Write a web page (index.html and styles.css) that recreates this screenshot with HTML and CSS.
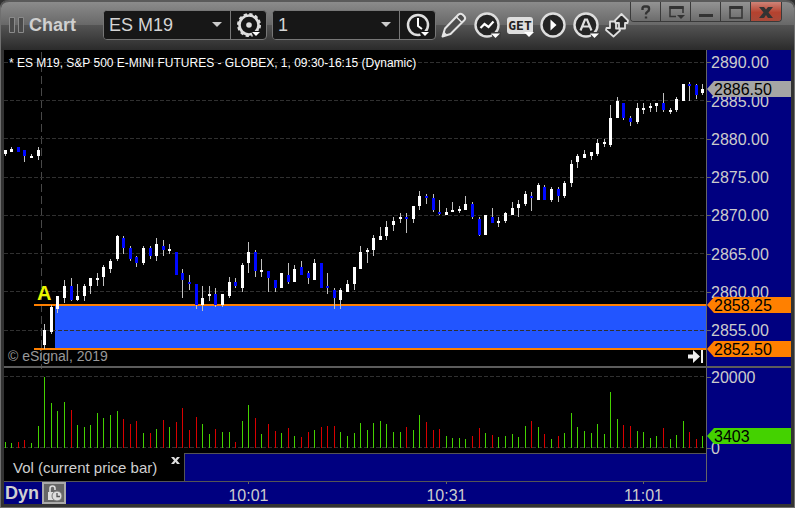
FILE: index.html
```html
<!DOCTYPE html>
<html lang="en">
<head>
<meta charset="utf-8">
<title>Chart - ES M19</title>
<link rel="stylesheet" href="styles.css">
</head>
<body>
<main class="window">
  <header class="titlebar">
    <svg class="grip" width="16" height="16" viewBox="0 0 16 16" aria-hidden="true"><path d="M.5.5h5v15h-5zM9.500.5h5v15h-5z" fill="#4a4a4a" stroke="#8a8a8a"/></svg>
    <h1 class="title">Chart</h1>
    <div class="combo combo-symbol">
      <select class="combo-select" aria-label="Symbol"><option>ES M19</option></select>
      <button class="combo-button" aria-label="Symbol settings">
        <svg width="28" height="28" viewBox="0 0 28 28"><circle cx="14" cy="14" r="9.500" fill="none" stroke="#dedede" stroke-width="2.600"/><circle cx="14" cy="14" r="11" fill="none" stroke="#dedede" stroke-width="2" stroke-dasharray="3.300 2.460"/><circle cx="14" cy="14" r="2.800" fill="#dedede"/><path d="M16 20h12v8H19z" fill="#171717"/><path d="M17 21h8l-4 4z" fill="#fff"/></svg>
      </button>
    </div>
    <div class="combo combo-interval">
      <select class="combo-select" aria-label="Interval"><option>1</option></select>
      <button class="combo-button" aria-label="Time template">
        <svg width="28" height="28" viewBox="0 0 28 28"><circle cx="14" cy="14" r="10" fill="none" stroke="#dedede" stroke-width="2.500"/><path d="M14 7v8l4 3" fill="none" stroke="#fff" stroke-width="2"/><path d="M15 20h13v8H18z" fill="#171717"/><path d="M17 21h8l-4 4z" fill="#fff"/></svg>
      </button>
    </div>
    <nav class="tools" aria-label="Chart tools">
      <button class="tool" aria-label="Draw"><svg width="28" height="28" viewBox="0 0 28 28"><path d="M2.500 25.500l2.500-8L18.500 3.500q2-1.500 4 0l1.500 1.500q2 2 .5 4L10.500 23z" fill="#4d4d4d" stroke="#e4e4e4" stroke-width="2" stroke-linejoin="round"/><path d="M16.500 6l5.500 5.500" stroke="#e4e4e4" stroke-width="1.500"/><path d="M2.500 25.500l1.500-5 3.500 3.500z" fill="#e4e4e4"/></svg></button>
      <button class="tool" aria-label="Studies"><svg width="28" height="28" viewBox="0 0 28 28"><circle cx="14" cy="14" r="11.500" fill="#242424" stroke="#dedede" stroke-width="2.400"/><path d="M7.500 17l4-4 4 3 5-5.500" fill="none" stroke="#fff" stroke-width="2.200"/><path d="M18 21h10v7h-8z" fill="#3c3c3c"/><path d="M18 22.500h9l-4.500 4.500z" fill="#fff"/></svg></button>
      <button class="tool tool-get" aria-label="Advanced GET"><span class="get">GET</span><svg class="caret" width="10" height="6" viewBox="0 0 10 6"><path d="M0 0h10L5 5z" fill="#fff"/></svg></button>
      <button class="tool" aria-label="Replay"><svg width="28" height="28" viewBox="0 0 28 28"><circle cx="14" cy="14" r="11.500" fill="#242424" stroke="#dedede" stroke-width="2.400"/><path d="M11.500 8.500v11l6-5.500z" fill="#fff"/></svg></button>
      <button class="tool" aria-label="Alerts"><svg width="28" height="28" viewBox="0 0 28 28"><circle cx="14" cy="14" r="11.500" fill="#242424" stroke="#dedede" stroke-width="2.400"/><path d="M8.500 19.500L13 8.500h2l4.500 11M10.500 15.500h7" fill="none" stroke="#dedede" stroke-width="2.200"/><path d="M18 21h10v7h-8z" fill="#3c3c3c"/><path d="M18 22.500h9l-4.500 4.500z" fill="#fff"/></svg></button>
      <button class="tool tool-last" aria-label="Trade"><svg width="24" height="28" viewBox="0 0 24 28"><g fill="#2a2a2a" stroke="#dedede" stroke-width="1.800" stroke-linejoin="round"><path d="M5 10.500h6v7h3.500l.5 2-6.500 6L1 19l.5-2H5z"/><path d="M16.500 3L23 9.500l-.5 2.500H20v5.500h-6V12h-3.500l-.5-2.500z"/></g></svg></button>
    </nav>
    <div class="window-buttons">
      <button class="wb" aria-label="Help"><svg width="28" height="20" viewBox="0 0 28 20"><path d="M10.500 8V6.500q0-2 2-2h2.500q2 0 2 2v1q0 1.500-1.500 2.200-1.500.8-1.500 2.300v.5M14 14.500v2" fill="none" stroke="#333" stroke-width="2.400"/></svg></button>
      <button class="wb" aria-label="Window options"><svg width="28" height="20" viewBox="0 0 28 20"><path d="M14 14.500H8V5h13v6" fill="none" stroke="#333" stroke-width="1.500"/><path d="M7.500 5.500h14" stroke="#333" stroke-width="3"/><path d="M15 13h8l-4 4z" fill="#333"/></svg></button>
      <button class="wb" aria-label="Minimize"><svg width="28" height="20" viewBox="0 0 28 20"><path d="M7 12h14v3H7z" fill="#333"/></svg></button>
      <button class="wb" aria-label="Maximize"><svg width="28" height="20" viewBox="0 0 28 20"><path d="M8 5h12v11H8z" fill="none" stroke="#333" stroke-width="1.500"/><path d="M7.500 5.500h13" stroke="#333" stroke-width="3"/></svg></button>
      <button class="wb wb-close" aria-label="Close"><svg width="28" height="20" viewBox="0 0 28 20"><path d="M7 5h5l2 2.500L16 5h5l-4.500 5.500L21 16h-5l-2-3-2 3H7l4.500-5.500z" fill="#333"/></svg></button>
    </div>
  </header>

  <section class="workspace">
    <div class="plot price-plot">
      <svg id="price" class="canvas" viewBox="4 50 702 316" preserveAspectRatio="none" aria-label="Price candles"></svg>
      <p class="caption">* ES M19, S&amp;P 500 E-MINI FUTURES - GLOBEX, 1, 09:30-16:15 (Dynamic)</p>
      <span class="marker">A</span>
      <p class="copyright">© eSignal, 2019</p>
      <button class="to-end" aria-label="Go to latest bar"><svg width="16" height="14" viewBox="0 0 16 14"><path d="M0 4.500h5V0l7 6.500L5 13V8.500H0z" fill="#eee"/><path d="M14 0v13" stroke="#eee" stroke-width="2"/></svg></button>
    </div>
    <svg id="price-axis" class="axis" viewBox="707 50 84 316" width="84" height="316"></svg>
    <div class="divider"></div>
    <div class="plot volume-plot">
      <svg id="volume" class="canvas" viewBox="4 368 702 85" preserveAspectRatio="none" aria-label="Volume bars"></svg>
      <div class="tabs">
        <div class="tab"><span>Vol (current price bar)</span><button class="tab-close" aria-label="Close study"><svg width="9" height="7" viewBox="0 0 9 7"><path d="M0 0h3l1.500 2L6 0h3L6 3.500 9 7H6L4.500 5 3 7H0l3-3.500z" fill="#ddd"/></svg></button></div>
        <div class="tab-fill"></div>
      </div>
    </div>
    <svg id="volume-axis" class="axis" viewBox="707 368 84 114" width="84" height="114"></svg>
    <footer class="timebar">
      <span class="mode">Dyn</span>
      <button class="lock" aria-label="Lock time range"><svg width="18" height="18" viewBox="0 0 18 18"><path d="M5 8V4.500Q5 2 7.500 2T10 4.500V6" fill="none" stroke="#ddd" stroke-width="1.600"/><path d="M3 8h7v8H3z" fill="#ddd"/><circle cx="12" cy="12" r="5" fill="#ddd" stroke="#777"/><path d="M12 9v3.500h3" fill="none" stroke="#555" stroke-width="1.300"/></svg></button>
      <svg id="times" class="times" aria-label="Time axis"></svg>
    </footer>
  </section>
</main>
<script src="chart.js"></script>
</body>
</html>
```
FILE: styles.css
```css
* { box-sizing: border-box; }
body {
  margin: 0;
  background: #303030;
  font-family: "Liberation Sans", Arial, sans-serif;
}
button {
  margin: 0;
  padding: 0;
  border: 0;
  background: none;
  color: inherit;
  font: inherit;
}
button svg { display: block; }
h1, p { margin: 0; }

.window {
  border: 1px solid #6f6f6f;
  border-top: 0;
  border-radius: 8px 8px 0 0;
  padding: 0 3px 3px;
  background: #333;
}

/* Title bar */
.titlebar {
  display: flex;
  align-items: center;
  height: 50px;
  margin: 0 -3px;
  padding: 0 12px 2px 8px;
  border-top: 2px solid #5a5a5a;
  border-radius: 8px 8px 0 0;
  background: linear-gradient(#8b8b8b 0, #686868 23px, #545454 23px, #2b2b2b 100%);
}
.title {
  width: 74px;
  margin-left: 4px;
  color: #d0d0d0;
  font-size: 18px;
  line-height: 24px;
}
.combo {
  position: relative;
  display: flex;
  width: 164px;
  height: 30px;
  border: 1px solid #777;
  border-radius: 4px;
  background: #171717;
  overflow: hidden;
}
.combo-interval { margin-left: 5px; }
.combo-select {
  flex: 1;
  min-width: 0;
  padding: 0 5px;
  border: 0;
  appearance: none;
  background: #171717;
  color: #d4d4d4;
  font: 18px "Liberation Sans", Arial, sans-serif;
}
.combo::after {
  content: "";
  position: absolute;
  top: 11px;
  right: 44px;
  border: 5px solid transparent;
  border-top-color: #ccc;
  border-bottom: 0;
  pointer-events: none;
}
.combo-button {
  display: grid;
  place-items: center;
  width: 36px;
  border-left: 1px solid #777;
}
.tools {
  display: flex;
  align-items: center;
  gap: 5px;
  margin-left: 4px;
}
.tool {
  display: grid;
  place-items: center;
  width: 28px;
  height: 30px;
}
.tool-last { width: 24px; }
.tool-get { position: relative; }
.get {
  padding: 0 1px;
  border-radius: 3px;
  background: #dedede;
  color: #222;
  font: bold 13px/17px "DejaVu Sans Mono", monospace;
}
.caret { position: absolute; right: 0; bottom: 2px; }
.window-buttons {
  display: flex;
  align-self: flex-start;
  margin-left: auto;
  border: 1px solid #3a3a3a;
  border-top: 0;
  border-radius: 0 0 4px 4px;
  overflow: hidden;
}
.wb {
  display: grid;
  place-items: center;
  width: 30px;
  height: 19px;
  border-right: 1px solid #3a3a3a;
  background: linear-gradient(#939393, #6c6c6c);
}
.wb-close { border-right: 0; background: linear-gradient(#cf8478, #b5422f 55%, #a84a3a); }

/* Chart panes */
.workspace {
  display: grid;
  grid-template-columns: minmax(0, 1fr) 84px;
}
.plot { position: relative; border-right: 1px solid #666; background: #000; }
.canvas { display: block; width: 100%; }
.price-plot .canvas { height: 316px; }
.volume-plot .canvas { height: 85px; }
.axis { display: block; background: #000080; }
.axis text, .times text { fill: #ccc; font-size: 16px; }
.axis .tag-text { fill: #000; }
.divider { grid-column: 1 / -1; height: 2px; background: #5c5c5c; }
.caption {
  position: absolute;
  top: 5px;
  left: 5px;
  color: #fff;
  font-size: 12px;
  line-height: 16px;
  white-space: nowrap;
}
.marker {
  position: absolute;
  top: 232px;
  left: 33px;
  color: #ebf500;
  font-size: 20px;
  font-weight: bold;
  line-height: 22px;
}
.copyright {
  position: absolute;
  bottom: 2px;
  left: 4px;
  color: #999;
  font-size: 14px;
  line-height: 16px;
}
.to-end { position: absolute; right: 2px; bottom: 2px; }

.tabs { display: flex; height: 29px; border-bottom: 1px solid #555; }
.tab {
  display: flex;
  width: 181px;
  padding: 0 4px 0 9px;
  border-right: 1px solid #555;
  justify-content: space-between;
  color: #d0d0d0;
  font-size: 15px;
  line-height: 30px;
  white-space: nowrap;
}
.tab-close { align-self: flex-start; margin-top: 4px; }
.tab-fill { flex: 1; border-top: 1px solid #555; background: #000080; }

.timebar {
  position: relative;
  display: flex;
  grid-column: 1 / -1;
  align-items: center;
  height: 22px;
  background: #000080;
}
.mode {
  padding-left: 1px;
  width: 38px;
  color: #d0d0d0;
  font-size: 18px;
  font-weight: bold;
  line-height: 22px;
}
.lock {
  display: grid;
  place-items: center;
  width: 24px;
  height: 22px;
  border: 2px solid #aaa;
  background: #666;
}
.times {
  position: absolute;
  top: 0;
  left: 0;
  width: calc(100% - 85px);
  height: 22px;
  pointer-events: none;
}
```
FILE: chart.js
```js
// Each bar: x, high, body top, body bottom, low, direction (u/d), volume top, volume colour (g/r)
const bars = `
5 150 150 154 156 u 442 g|11 147 149 152 152 u 443 g|18 147 147 152 152 d 442 r|24 150 150 156 162 d 440 r
31 154 156 158 158 u 443 g|38 147 150 156 160 u 426 g|44 324 330 345 349 u 377 g|51 305 307 332 334 u 403 g
57 296 296 309 313 u 411 g|64 280 286 298 303 u 402 g|71 278 286 300 301 d 410 r|77 284 296 300 301 u 425 g
84 284 286 296 301 u 427 g|90 278 278 286 294 u 425 g|97 273 278 280 286 u 413 g|103 265 267 277 286 u 418 g
110 259 261 269 273 u 415 g|117 235 236 259 261 u 411 g|123 236 238 248 254 d 419 r|130 246 248 259 261 d 424 r
136 256 257 263 267 d 421 r|143 246 248 263 265 u 433 g|150 246 248 256 259 d 433 r|156 238 244 256 261 u 429 g
163 240 246 250 256 d 420 r|169 244 249 251 254 u 427 g|176 252 252 275 275 d 422 r|182 269 273 280 298 d 408 r
189 275 282 284 290 d 430 r|196 284 284 305 309 d 417 r|202 286 298 305 311 u 424 g|209 286 294 296 301 u 434 g
215 288 294 305 307 d 429 r|222 294 294 305 307 u 432 g|229 277 282 296 298 u 432 g|235 278 282 286 288 d 442 r
242 263 265 288 292 u 421 g|248 242 252 263 273 u 405 g|255 250 252 271 277 d 418 r|261 259 270 272 277 u 434 g
268 271 271 278 292 d 424 r|275 280 280 288 292 d 431 r|281 273 273 288 288 u 433 g|288 263 275 282 284 d 428 r
294 265 269 282 282 u 436 g|301 261 267 275 275 d 437 r|308 271 273 278 284 d 432 r|314 259 263 280 280 u 430 g
321 263 263 288 288 d 427 r|327 273 286 288 294 d 426 r|334 288 290 298 309 d 426 r|340 288 290 300 309 u 432 g
347 280 284 292 292 u 436 g|354 267 267 284 290 u 433 g|360 246 252 269 269 u 423 g|367 248 250 252 263 u 430 g
373 235 238 250 256 u 423 g|380 227 236 240 240 u 421 g|386 221 227 236 240 u 424 g|393 217 221 225 231 u 432 g
400 213 217 219 223 u 432 g|406 213 217 219 233 d 427 r|413 206 206 219 223 u 430 g|419 191 196 206 210 u 415 g
426 194 196 198 204 d 422 r|433 194 198 210 212 d 430 r|439 200 212 214 215 d 429 r|446 208 212 215 215 u 436 g
452 202 210 212 212 u 438 g|459 206 209 211 213 u 438 g|465 196 204 210 210 u 439 g|472 202 204 217 219 d 436 r
479 217 219 235 236 d 428 r|485 215 215 235 235 u 433 g|492 208 217 223 223 d 435 r|498 217 221 223 227 u 437 g
505 212 213 221 223 u 436 g|512 202 208 215 215 u 434 g|518 200 204 208 217 u 437 g|525 191 194 204 206 u 426 g
531 192 196 198 211 d 421 r|538 183 185 200 200 u 427 g|544 185 187 200 200 d 434 r|551 187 189 200 202 u 439 g
558 187 189 196 202 d 436 r|564 181 183 196 198 u 433 g|571 160 164 183 187 u 413 g|577 154 156 162 168 u 427 g
584 150 154 158 158 u 431 g|591 152 152 156 160 u 433 g|597 139 143 154 156 u 424 g|604 139 142 144 147 u 434 g
610 105 118 145 147 u 392 g|617 97 101 118 118 u 419 g|623 103 103 118 120 d 425 r|630 116 118 122 126 d 426 r
637 103 108 122 124 u 431 g|643 103 108 110 114 u 432 g|650 103 106 108 112 u 438 g|656 103 103 106 112 u 436 g
663 93 103 110 112 d 428 r|670 108 110 112 114 u 439 g|676 97 99 110 112 u 435 g|683 84 84 101 101 u 421 g
689 82 84 86 101 d 432 r|696 84 85 95 99 d 439 r|702 84 89 93 95 u 436 g`
  .trim().split(/[|\n]/).map(row => row.split(" ").map(v => (isNaN(v) ? v : +v)));

const rect = (x, y, w, h, fill) => `<rect x="${x}" y="${y}" width="${w}" height="${h}" fill="${fill}"/>`;
const grid = y => `<path d="M4 ${y}.5H706" stroke="#303030" stroke-dasharray="4 2"/>`;

let price = `<path d="M41.5 50V366" stroke="#484848" stroke-dasharray="8 4" stroke-dashoffset="10"/>`;
price += rect(55, 306, 651, 42, "#2255ff");
price += [62, 100, 138, 177, 215, 253, 291, 330].map(grid).join("");
price += rect(34, 304, 672, 2, "#ff8000") + rect(34, 348, 672, 2, "#ff8000");
let volume = grid(376) + grid(447) + rect(41, 368, 1, 1, "#484848");

for (const [x, high, top, bottom, low, dir, vTop, vColor] of bars) {
  price += rect(x, high, 1, low - high, "#c0c0c0");
  price += rect(x - 1, top, 3, bottom - top, dir === "u" ? "#fff" : "#0008ff");
  volume += rect(x, vTop, 1, 448 - vTop, vColor === "g" ? "#44d200" : "#d80000");
}
document.getElementById("price").innerHTML = price;
document.getElementById("volume").innerHTML = volume;

const label = (y, text) => `<path d="M707 ${y}.5h4" stroke="#666"/><text x="711" y="${y + 6}">${text}</text>`;
const tag = (y, text, color) =>
  `<path d="M707 ${y}l7-8h77v16h-77z" fill="${color}"/><text class="tag-text" x="714" y="${y + 6}">${text}</text>`;

document.getElementById("price-axis").innerHTML =
  [62, 101, 139, 177, 215, 254, 292, 330].map((y, i) => label(y, (2890 - i * 5) + ".00")).join("") +
  tag(89, "2886.50", "#a5a5a5") + tag(305, "2858.25", "#ff8000") + tag(349, "2852.50", "#ff8000");
document.getElementById("volume-axis").innerHTML =
  label(377, "20000") + label(448, "0") + tag(436, "3403", "#44d200");

document.getElementById("times").innerHTML = [[248, "10:01"], [446, "10:31"], [643, "11:01"]]
  .map(([x, t]) => {
    const at = ((x - 3.5) / 702 * 100).toFixed(2) + "%";
    return `<line x1="${at}" x2="${at}" y1="0" y2="2" stroke="#666"/><text x="${at}" y="19" text-anchor="middle">${t}</text>`;
  }).join("");
```
